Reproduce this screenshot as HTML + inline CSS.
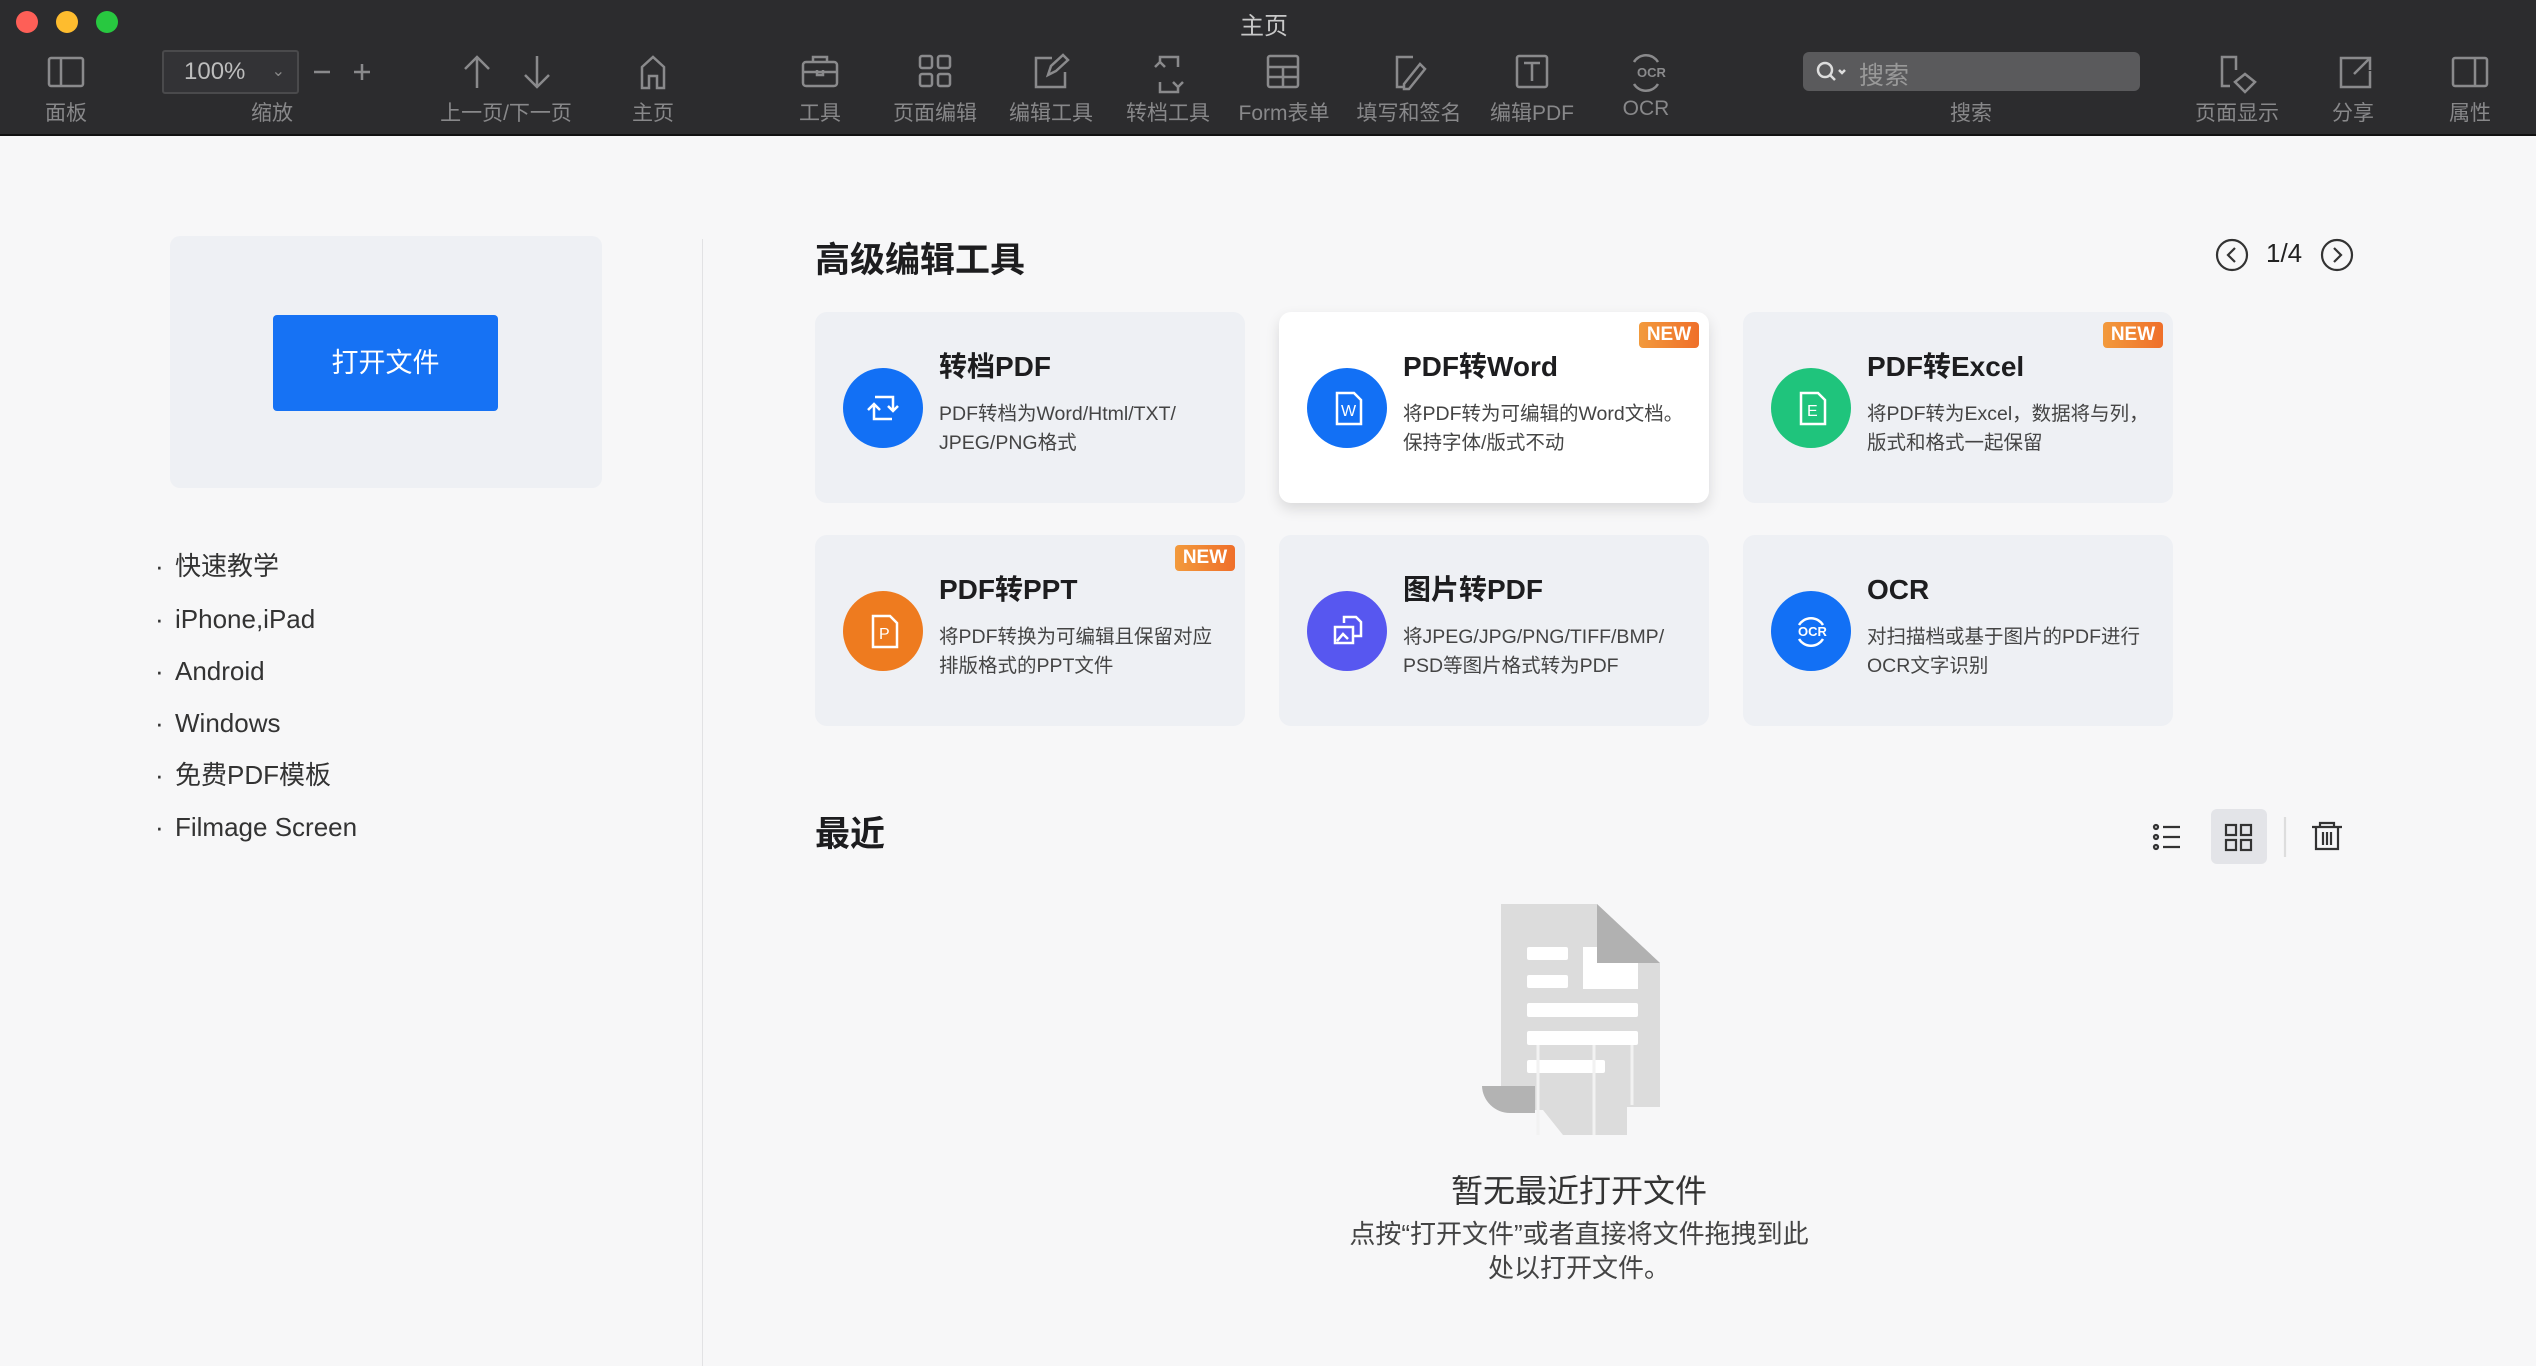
<!DOCTYPE html>
<html><head><meta charset="utf-8"><style>
*{margin:0;padding:0;box-sizing:border-box}
body{width:2536px;height:1366px;overflow:hidden;background:#f7f7f8;font-family:"Liberation Sans","Noto Sans CJK SC",sans-serif;position:relative}
.tb{position:absolute;left:0;top:0;width:2536px;height:136px;background:#2c2c2e;border-bottom:2px solid #111}
.a{position:absolute}
.lbl{position:absolute;top:97px;font-size:21px;color:#88888a;transform:translateX(-50%);white-space:nowrap}
.dot{position:absolute;top:11px;width:22px;height:22px;border-radius:50%}
.card{position:absolute;width:430px;height:191px;background:#eef0f4;border-radius:12px}
.card.w{background:#fff;box-shadow:0 6px 14px rgba(0,0,0,.12)}
.circ{position:absolute;left:28px;top:56px;width:80px;height:80px;border-radius:50%}
.ct{position:absolute;left:124px;top:35px;font-size:28px;line-height:40px;font-weight:bold;color:#1d1d1f}
.cd{position:absolute;left:124px;top:88px;font-size:19.5px;line-height:29px;color:#444;white-space:nowrap}
.new{position:absolute;right:10px;top:10px;width:60px;height:26px;background:linear-gradient(90deg,#f29a3c,#ef6f2a);color:#fff;font-size:19px;font-weight:bold;text-align:center;line-height:26px;border-radius:4px}
.lk{position:absolute;left:175px;height:40px;line-height:40px;font-size:26px;color:#333;white-space:nowrap}
.bu{position:absolute;left:155px;width:6px;height:40px;line-height:40px;font-size:26px;color:#333}
</style></head><body>
<div class="tb">
<div class="dot" style="left:16px;background:#fe5f57"></div>
<div class="dot" style="left:56px;background:#febc2e"></div>
<div class="dot" style="left:96px;background:#28c840"></div>
<div class="a" style="left:1240px;top:6px;font-size:24px;color:#c8c8c8">主页</div>
<svg class="a" width="2536" height="136" style="left:0;top:0" fill="none" stroke="#8a8a8c" stroke-width="2.5">
<rect x="49" y="58" width="34" height="28" rx="2"/><line x1="61" y1="58" x2="61" y2="86"/>
<line x1="314" y1="72" x2="330" y2="72"/><line x1="354" y1="72" x2="370" y2="72"/><line x1="362" y1="64" x2="362" y2="80"/>
<path d="M477 88V57M465 69l12-12 12 12"/><path d="M537 56v31M525 75l12 12 12-12"/>
<path d="M642 88V67l11-10 11 10v21h-7V76h-8v12z"/>
<rect x="803" y="62" width="34" height="24" rx="3"/><path d="M813 62v-5h14v5M803 72h34M817 70v5h6v-5"/>
<rect x="920" y="56" width="12" height="12" rx="2"/><rect x="938" y="56" width="12" height="12" rx="2"/><rect x="920" y="74" width="12" height="12" rx="2"/><rect x="938" y="74" width="12" height="12" rx="2"/>
<path d="M1052 58h-16v29h29v-15M1048 75l3-9 12-11 5 5-12 11z"/>
<path d="M1160 62v-5h18v10M1178 87v5h-18v-10M1155 67l5-5 5 5M1173 82l5 5 5-5"/>
<rect x="1268" y="56" width="30" height="31" rx="2"/><path d="M1268 67h30M1268 77h30M1283 67v20"/>
<path d="M1413 57h-16v30h8M1404 84l16-20 5 5-16 20h-5z"/>
<rect x="1517" y="56" width="30" height="31" rx="2"/><path d="M1524 63h16M1532 63v18"/>
<path d="M1634 62a14 14 0 0 1 24 0M1634 84a14 14 0 0 0 24 0"/>
<path d="M2245 74l10 8-10 10-10-10z M2236 70v-13h-14v29h8"/>
<path d="M2358 58h-17v29h29v-16M2358 58h12v12M2370 58l-16 16"/>
<rect x="2453" y="58" width="34" height="28" rx="2"/><line x1="2475" y1="58" x2="2475" y2="86"/>
</svg>
<div class="a" style="left:1637px;top:65px;font-size:13px;font-weight:bold;color:#8a8a8c">OCR</div>
<div class="a" style="left:162px;top:50px;width:137px;height:44px;border:2px solid #4a4a4c;background:#333336;border-radius:3px;color:#bdbdbd;font-size:24px;line-height:40px;padding-left:20px">100%<span style="position:absolute;right:12px;font-size:16px;color:#888">⌄</span></div>
<div class="a" style="left:1803px;top:52px;width:337px;height:39px;background:#5a5a5c;border-radius:6px">
<svg class="a" style="left:12px;top:8px" width="36" height="24" fill="none" stroke="#ddd" stroke-width="2.5"><circle cx="10" cy="10" r="7"/><path d="M15 15l5 5M24 10l3 3 3-3"/></svg>
<span class="a" style="left:56px;top:4px;font-size:25px;color:#999">搜索</span></div>
<div class="lbl" style="left:66px">面板</div><div class="lbl" style="left:272px">缩放</div><div class="lbl" style="left:506px">上一页/下一页</div><div class="lbl" style="left:653px">主页</div><div class="lbl" style="left:820px">工具</div><div class="lbl" style="left:935px">页面编辑</div><div class="lbl" style="left:1051px">编辑工具</div><div class="lbl" style="left:1168px">转档工具</div><div class="lbl" style="left:1284px">Form表单</div><div class="lbl" style="left:1409px">填写和签名</div><div class="lbl" style="left:1532px">编辑PDF</div><div class="lbl" style="left:1646px">OCR</div><div class="lbl" style="left:1971px">搜索</div><div class="lbl" style="left:2237px">页面显示</div><div class="lbl" style="left:2353px">分享</div><div class="lbl" style="left:2470px">属性</div>
</div>

<div class="a" style="left:170px;top:236px;width:432px;height:252px;background:#eef0f4;border-radius:10px"></div>
<div class="a" style="left:273px;top:315px;width:225px;height:96px;background:#1672f4;border-radius:4px;color:#fff;font-size:27px;text-align:center;line-height:96px">打开文件</div>
<div class="a" style="left:702px;top:239px;width:1px;height:1127px;background:#e2e2e4"></div>
<div class="bu" style="top:546px">·</div><div class="lk" style="top:546px">快速教学</div>
<div class="bu" style="top:599px">·</div><div class="lk" style="top:599px">iPhone,iPad</div>
<div class="bu" style="top:651px">·</div><div class="lk" style="top:651px">Android</div>
<div class="bu" style="top:703px">·</div><div class="lk" style="top:703px">Windows</div>
<div class="bu" style="top:755px">·</div><div class="lk" style="top:755px">免费PDF模板</div>
<div class="bu" style="top:807px">·</div><div class="lk" style="top:807px">Filmage Screen</div>

<div class="a" style="left:815px;top:232px;font-size:35px;font-weight:bold;color:#1d1d1f">高级编辑工具</div>
<svg class="a" style="left:2214px;top:238px" width="144" height="34" fill="none" stroke="#333" stroke-width="2.2"><circle cx="18" cy="17" r="15"/><path d="M21 10l-7 7 7 7"/><circle cx="123" cy="17" r="15"/><path d="M120 10l7 7-7 7"/></svg>
<div class="a" style="left:2266px;top:238px;font-size:26px;color:#222">1/4</div>

<div class="card" style="left:815px;top:312px"><div class="circ" style="background:#1270f5"></div>
<svg class="a" style="left:48px;top:76px" width="40" height="40" fill="none" stroke="#fff" stroke-width="2.5"><path d="M12 9h18v13M29 31H11V18M25 18l5 5 5-5M5 22l6-6 6 6"/></svg>
<div class="ct">转档PDF</div><div class="cd">PDF转档为Word/Html/TXT/<br>JPEG/PNG格式</div></div>
<div class="card w" style="left:1279px;top:312px"><div class="circ" style="background:#1270f5"></div>
<svg class="a" style="left:50px;top:76px" width="40" height="40" fill="none" stroke="#fff" stroke-width="2.5"><path d="M8 5h17l7 7v24H8z"/><text x="12" y="28" fill="#fff" stroke="none" font-size="16" font-family="Liberation Sans">W</text></svg>
<div class="ct">PDF转Word</div><div class="cd">将PDF转为可编辑的Word文档。<br>保持字体/版式不动</div><div class="new">NEW</div></div>
<div class="card" style="left:1743px;top:312px"><div class="circ" style="background:#1fc47c"></div>
<svg class="a" style="left:50px;top:76px" width="40" height="40" fill="none" stroke="#fff" stroke-width="2.5"><path d="M8 5h17l7 7v24H8z"/><text x="14" y="28" fill="#fff" stroke="none" font-size="16" font-family="Liberation Sans">E</text></svg>
<div class="ct">PDF转Excel</div><div class="cd">将PDF转为Excel，数据将与列，<br>版式和格式一起保留</div><div class="new">NEW</div></div>

<div class="card" style="left:815px;top:535px"><div class="circ" style="background:#ee7b1f"></div>
<svg class="a" style="left:50px;top:76px" width="40" height="40" fill="none" stroke="#fff" stroke-width="2.5"><path d="M8 5h17l7 7v24H8z"/><text x="14" y="28" fill="#fff" stroke="none" font-size="16" font-family="Liberation Sans">P</text></svg>
<div class="ct">PDF转PPT</div><div class="cd">将PDF转换为可编辑且保留对应<br>排版格式的PPT文件</div><div class="new">NEW</div></div>
<div class="card" style="left:1279px;top:535px"><div class="circ" style="background:#5757f0"></div>
<svg class="a" style="left:48px;top:76px" width="40" height="40" fill="none" stroke="#fff" stroke-width="2.5"><path d="M17 12V6h12l5 5v14h-8M8 16h18v16H8zM10 30l6-7 5 5"/></svg>
<div class="ct">图片转PDF</div><div class="cd">将JPEG/JPG/PNG/TIFF/BMP/<br>PSD等图片格式转为PDF</div></div>
<div class="card" style="left:1743px;top:535px"><div class="circ" style="background:#1270f5"></div>
<svg class="a" style="left:48px;top:76px" width="40" height="40" fill="none" stroke="#fff" stroke-width="2.5"><path d="M8 14a14 14 0 0 1 24 0M8 28a14 14 0 0 0 24 0"/></svg>
<div class="a" style="left:55px;top:89px;font-size:13px;font-weight:bold;color:#fff">OCR</div>
<div class="ct">OCR</div><div class="cd">对扫描档或基于图片的PDF进行<br>OCR文字识别</div></div>

<div class="a" style="left:815px;top:806px;font-size:35px;font-weight:bold;color:#1d1d1f">最近</div>
<div class="a" style="left:2211px;top:809px;width:56px;height:55px;background:#e3e4e8;border-radius:6px"></div>
<svg class="a" style="left:2150px;top:815px" width="200" height="44" fill="none" stroke="#333" stroke-width="2.2">
<circle cx="6" cy="12" r="2"/><circle cx="6" cy="22" r="2"/><circle cx="6" cy="32" r="2"/><path d="M13 12h17M13 22h17M13 32h17"/>
<rect x="76" y="10" width="10" height="10"/><rect x="91" y="10" width="10" height="10"/><rect x="76" y="25" width="10" height="10"/><rect x="91" y="25" width="10" height="10"/>
<path d="M135 2v40" stroke="#ddd"/>
<path d="M162 12h30M170 12V8h14v4M166 12v22h22V12M173 17v13M177 17v13M181 17v13"/></svg>

<svg class="a" style="left:0;top:0" width="2536" height="1366">
<path d="M1501 904h96l63 59v144h-33v28h-64l-20-25h-22v-20h-20z" fill="#dcdcdc"/>
<path d="M1597 904l63 59h-63z" fill="#b1b1b1"/>
<path d="M1482 1086h53v27h-25a28 28 0 0 1 -28 -27z" fill="#b3b3b3"/>
<g fill="#fff"><rect x="1527" y="947" width="41" height="13" rx="2"/><rect x="1527" y="975" width="41" height="13" rx="2"/><path d="M1583 947h14v16h41v26h-55z"/><rect x="1527" y="1003" width="111" height="14" rx="2"/><rect x="1527" y="1031" width="111" height="14" rx="2"/><rect x="1527" y="1060" width="78" height="13" rx="2"/>
<path d="M1538 1045v90M1594 1045v90M1632 1045v60" stroke="#f2f2f2" stroke-width="3"/></g>
</svg>
<div class="a" style="left:1279px;top:1166px;width:600px;text-align:center;font-size:32px;color:#333">暂无最近打开文件</div>
<div class="a" style="left:1229px;top:1217px;width:700px;text-align:center;font-size:26px;line-height:34px;color:#444">点按“打开文件”或者直接将文件拖拽到此<br>处以打开文件。</div>
</body></html>
